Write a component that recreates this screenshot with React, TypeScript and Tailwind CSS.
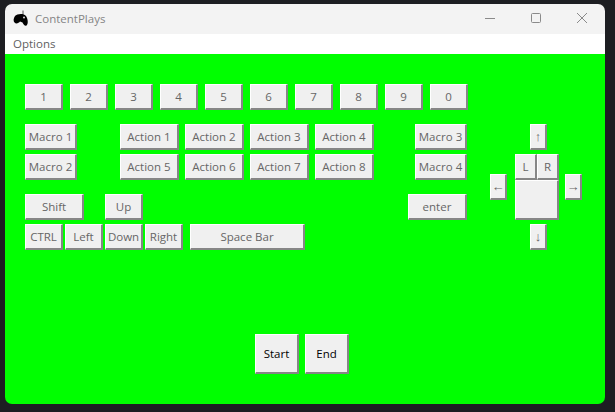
function Btn({ w, h = "h-[26px]", cls = "", dark = false, arrow = false, children }: { w: string; h?: string; cls?: string; dark?: boolean; arrow?: boolean; children?: React.ReactNode }) {
  return (
    <div
      className={`${w} ${h} ${cls} shrink-0 flex items-center justify-center bg-[#f0f0f0] border-t border-l border-t-white border-l-white border-b-2 border-r-2 border-b-[#868686] border-r-[#868686] leading-none ${arrow ? "text-[13px] font-['Liberation_Sans',sans-serif]" : "text-[11.5px]"} ${dark ? "text-black font-medium pt-[1px]" : "text-[#666666]"}`}
    >
      {children}
    </div>
  );
}

const nums = ["1", "2", "3", "4", "5", "6", "7", "8", "9", "0"];

export default function App() {
  return (
    <div className="w-[615px] h-[412px] bg-[#1d1e22] pt-[4px] pl-[5px] font-['Open_Sans','Noto_Sans',sans-serif]">
      <div className="w-[600px] h-[400px] rounded-[7px] overflow-hidden flex flex-col">
        <div className="h-[30px] bg-[#f3f3f3] flex items-center shrink-0">
          <svg className="ml-[8px]" width="16" height="18" viewBox="0 0 16 18">
            <path d="M10 0.5v4" stroke="#555" strokeWidth="1" fill="none" />
            <path d="M2 6C4 3.5 11 3 13 6C15 9 15.5 14 13.5 15.5C12 16.5 10.5 14.5 9.5 12.5L7 11.5C6 13 3 14.5 1.5 12.5C0 11 .5 8 2 6Z" fill="#000" />
            <circle cx="11" cy="7.5" r="0.9" fill="#f3f3f3" />
          </svg>
          <span className="ml-[6px] text-[11.5px] text-[#858585]">ContentPlays</span>
          <div className="ml-auto flex items-center">
            <svg width="46" height="30" viewBox="0 0 46 30">
              <path d="M18 14.5h10" stroke="#8a8a8a" strokeWidth="1" />
            </svg>
            <svg width="46" height="30" viewBox="0 0 46 30">
              <rect x="18.5" y="9.5" width="9" height="9" rx="1" fill="none" stroke="#8a8a8a" strokeWidth="1" />
            </svg>
            <svg width="46" height="30" viewBox="0 0 46 30">
              <path d="M18 9l10 10M28 9L18 19" stroke="#8a8a8a" strokeWidth="1" />
            </svg>
          </div>
        </div>
        <div className="h-[20px] bg-white shrink-0 pl-[8px] text-[11.5px] leading-[20px] text-[#5f5f5f]">Options</div>
        <div className="flex-1 bg-[#00ff00] pt-[30px] pl-[20px]">
          <div className="flex gap-[7px]">
            {nums.map((n) => (
              <Btn key={n} w="w-[38px]">{n}</Btn>
            ))}
          </div>
          <div className="flex mt-[14px]">
            <div className="w-[442px]">
              <div className="flex">
                <Btn w="w-[52px]">Macro 1</Btn>
                <div className="flex gap-[6px] ml-[43px]">
                  <Btn w="w-[59px]">Action 1</Btn>
                  <Btn w="w-[59px]">Action 2</Btn>
                  <Btn w="w-[59px]">Action 3</Btn>
                  <Btn w="w-[59px]">Action 4</Btn>
                </div>
                <Btn w="w-[52px]" cls="ml-[41px]">Macro 3</Btn>
              </div>
              <div className="flex mt-[4px]">
                <Btn w="w-[52px]">Macro 2</Btn>
                <div className="flex gap-[6px] ml-[43px]">
                  <Btn w="w-[59px]">Action 5</Btn>
                  <Btn w="w-[59px]">Action 6</Btn>
                  <Btn w="w-[59px]">Action 7</Btn>
                  <Btn w="w-[59px]">Action 8</Btn>
                </div>
                <Btn w="w-[52px]" cls="ml-[41px]">Macro 4</Btn>
              </div>
              <div className="flex mt-[14px]">
                <Btn w="w-[59px]">Shift</Btn>
                <Btn w="w-[38px]" cls="ml-[21px]">Up</Btn>
                <Btn w="w-[59px]" cls="ml-[265px]">enter</Btn>
              </div>
              <div className="flex mt-[4px]">
                <Btn w="w-[38px]">CTRL</Btn>
                <Btn w="w-[38px]" cls="ml-[2px]">Left</Btn>
                <Btn w="w-[38px]" cls="ml-[2px]">Down</Btn>
                <Btn w="w-[38px]" cls="ml-[2px]">Right</Btn>
                <Btn w="w-[115px]" cls="ml-[7px]">Space Bar</Btn>
              </div>
            </div>
            <div className="flex ml-[23px]">
              <div className="pt-[50px]">
                <Btn w="w-[17px]" arrow>←</Btn>
              </div>
              <div className="ml-[8px] w-[44px]">
                <Btn w="w-[17px]" cls="ml-[15px]" arrow>↑</Btn>
                <div className="flex mt-[4px]">
                  <Btn w="w-[22px]">L</Btn>
                  <Btn w="w-[22px]">R</Btn>
                </div>
                <Btn w="w-[44px]" h="h-[40px]" />
                <Btn w="w-[17px]" cls="ml-[15px] mt-[4px]" arrow>↓</Btn>
              </div>
              <div className="ml-[6px] pt-[50px]">
                <Btn w="w-[17px]" arrow>→</Btn>
              </div>
            </div>
          </div>
          <div className="flex gap-[6px] ml-[230px] mt-[84px]">
            <Btn w="w-[44px]" h="h-[40px]" dark>Start</Btn>
            <Btn w="w-[44px]" h="h-[40px]" dark>End</Btn>
          </div>
        </div>
      </div>
    </div>
  );
}
